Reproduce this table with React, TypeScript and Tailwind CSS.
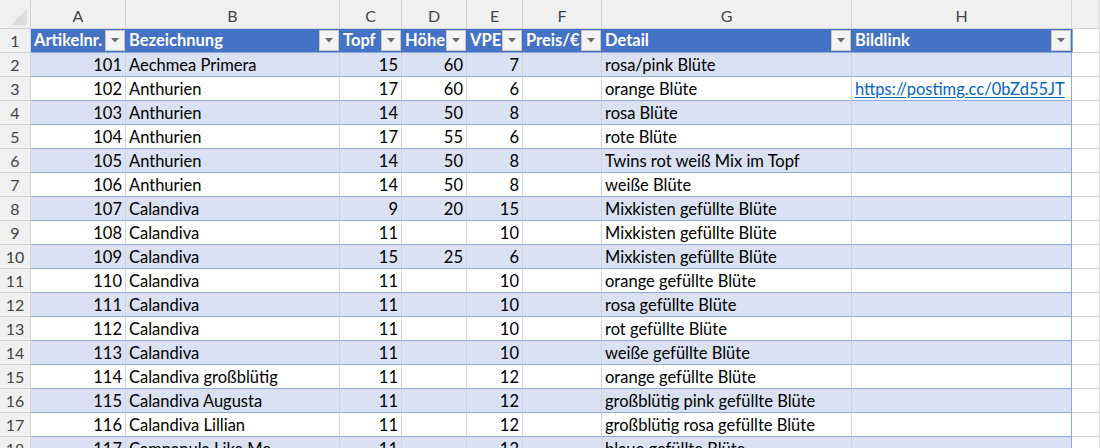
import React from 'react';

type Row = {
  nr: number;
  name: string;
  topf: number;
  hoehe?: number;
  vpe: number;
  detail: string;
  link?: string;
};

const rows: Row[] = [
  { nr: 101, name: 'Aechmea Primera', topf: 15, hoehe: 60, vpe: 7, detail: 'rosa/pink Blüte' },
  { nr: 102, name: 'Anthurien', topf: 17, hoehe: 60, vpe: 6, detail: 'orange Blüte', link: 'https://postimg.cc/0bZd55JT' },
  { nr: 103, name: 'Anthurien', topf: 14, hoehe: 50, vpe: 8, detail: 'rosa Blüte' },
  { nr: 104, name: 'Anthurien', topf: 17, hoehe: 55, vpe: 6, detail: 'rote Blüte' },
  { nr: 105, name: 'Anthurien', topf: 14, hoehe: 50, vpe: 8, detail: 'Twins rot weiß Mix im Topf' },
  { nr: 106, name: 'Anthurien', topf: 14, hoehe: 50, vpe: 8, detail: 'weiße Blüte' },
  { nr: 107, name: 'Calandiva', topf: 9, hoehe: 20, vpe: 15, detail: 'Mixkisten gefüllte Blüte' },
  { nr: 108, name: 'Calandiva', topf: 11, vpe: 10, detail: 'Mixkisten gefüllte Blüte' },
  { nr: 109, name: 'Calandiva', topf: 15, hoehe: 25, vpe: 6, detail: 'Mixkisten gefüllte Blüte' },
  { nr: 110, name: 'Calandiva', topf: 11, vpe: 10, detail: 'orange gefüllte Blüte' },
  { nr: 111, name: 'Calandiva', topf: 11, vpe: 10, detail: 'rosa gefüllte Blüte' },
  { nr: 112, name: 'Calandiva', topf: 11, vpe: 10, detail: 'rot gefüllte Blüte' },
  { nr: 113, name: 'Calandiva', topf: 11, vpe: 10, detail: 'weiße gefüllte Blüte' },
  { nr: 114, name: 'Calandiva großblütig', topf: 11, vpe: 12, detail: 'orange gefüllte Blüte' },
  { nr: 115, name: 'Calandiva Augusta', topf: 11, vpe: 12, detail: 'großblütig pink gefüllte Blüte' },
  { nr: 116, name: 'Calandiva Lillian', topf: 11, vpe: 12, detail: 'großblütig rosa gefüllte Blüte' },
  { nr: 117, name: 'Campanula Like Me', topf: 11, vpe: 12, detail: 'blaue gefüllte Blüte' },
];

const columns = ['A', 'B', 'C', 'D', 'E', 'F', 'G', 'H', ''];
const headers = ['Artikelnr.', 'Bezeichnung', 'Topf', 'Höhe', 'VPE', 'Preis/€', 'Detail', 'Bildlink'];

const grid = 'grid grid-cols-[31px_95px_214px_62px_65px_56px_79px_250px_220px_1fr]';

const FilterButton = () => (
  <div className="w-[20px] h-[21px] shrink-0 bg-[#f4f4f4] border border-[#c6c6c6] flex items-center justify-center">
    <svg width="8" height="5" viewBox="0 0 8 5">
      <path d="M0 0 H8 L4 4.5 Z" fill="#6a6a6a" />
    </svg>
  </div>
);

const Cell = ({ children, className = '' }: { children?: React.ReactNode; className?: string }) => (
  <div className={`h-[24px] flex items-center px-[3px] pt-[1px] border-r border-b whitespace-nowrap ${className}`}>
    {children}
  </div>
);

export default function App() {
  return (
    <div
      className="w-[1100px] h-[448px] overflow-hidden bg-white text-[16.5px] text-black leading-none"
      style={{ fontFamily: 'Lato, "Open Sans", sans-serif' }}
    >
      {/* column letters */}
      <div className={`${grid} h-[29px] bg-[#f0f0f0] text-[#444]`}>
        <div className="border-r border-b border-[#d0d0d0] relative">
          <div className="absolute right-[3px] bottom-[3px] w-0 h-0 border-l-[16px] border-l-transparent border-b-[16px] border-b-[#dcdcdc]" />
        </div>
        {columns.map((c, i) => (
          <div key={i} className="border-r border-b border-[#d4d4d4] flex items-center justify-center text-[16px] pt-[3px]">
            {c}
          </div>
        ))}
      </div>

      {/* table header row */}
      <div className={grid}>
        <div className="h-[24px] bg-[#f0f0f0] border-r border-b border-[#d4d4d4] flex items-center justify-center text-[#444] text-[16px]">1</div>
        {headers.map((h) => (
          <div key={h} className="h-[24px] bg-[#4472c4] border-b border-[#8ea9db] flex items-center justify-between gap-[1px] pl-[3px] pr-[1px] text-white font-bold whitespace-nowrap">
            <span>{h}</span>
            <FilterButton />
          </div>
        ))}
        <div className="h-[24px] border-r border-b border-[#d4d4d4] border-l border-l-[#8ea9db]" />
      </div>

      {rows.map((r, i) => {
        const band = i % 2 === 0 ? 'bg-[#d9e1f2]' : 'bg-white';
        const line = 'border-b-[#8ea9db] border-r-[#d4d4d4]';
        return (
          <div key={r.nr} className={grid}>
            <div className="h-[24px] bg-[#f0f0f0] border-r border-b border-[#d4d4d4] flex items-center justify-center text-[#444] text-[16px]">
              {i + 2}
            </div>
            <Cell className={`${band} ${line} justify-end`}>{r.nr}</Cell>
            <Cell className={`${band} ${line}`}>{r.name}</Cell>
            <Cell className={`${band} ${line} justify-end`}>{r.topf}</Cell>
            <Cell className={`${band} ${line} justify-end`}>{r.hoehe ?? ''}</Cell>
            <Cell className={`${band} ${line} justify-end`}>{r.vpe}</Cell>
            <Cell className={`${band} ${line}`} />
            <Cell className={`${band} ${line}`}>{r.detail}</Cell>
            <Cell className={`${band} border-b-[#8ea9db] border-r-[#8ea9db]`}>
              {r.link && <span className="text-[#0563c1] underline underline-offset-2">{r.link}</span>}
            </Cell>
            <Cell className="bg-white border-[#d4d4d4]" />
          </div>
        );
      })}
    </div>
  );
}
